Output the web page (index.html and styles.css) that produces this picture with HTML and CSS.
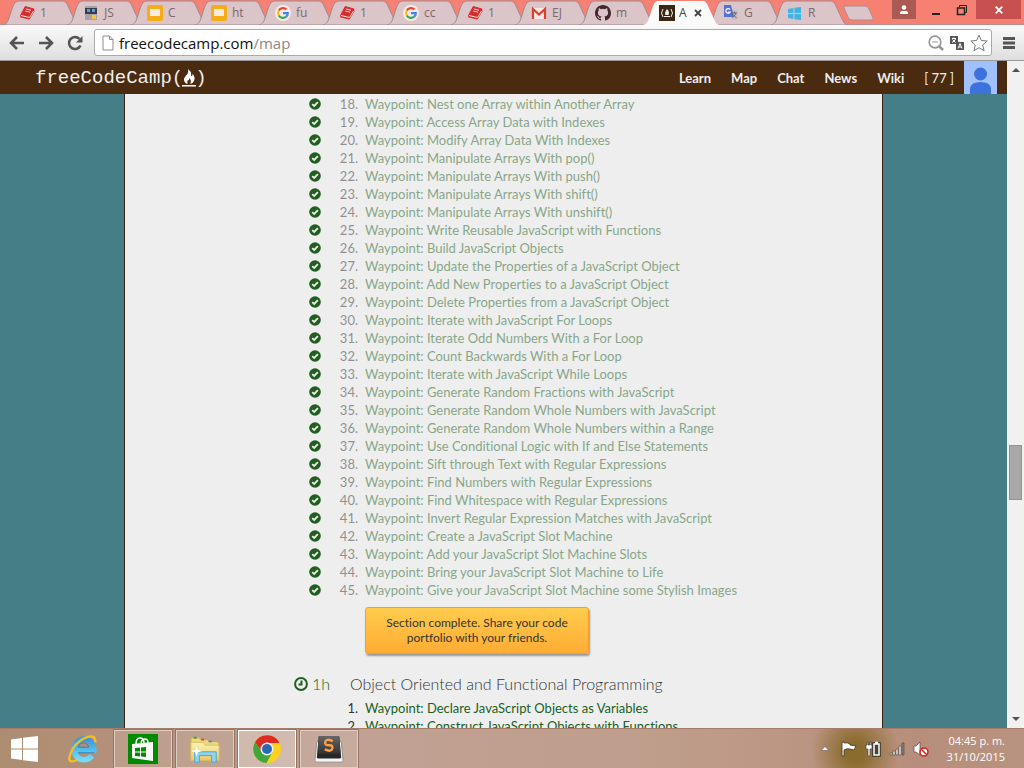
FILE: index.html
```html
<!DOCTYPE html>
<html lang="en">
<head>
<meta charset="utf-8">
<title>freeCodeCamp map</title>
<link rel="stylesheet" href="styles.css">
</head>
<body>
<svg class="defs" aria-hidden="true">
  <defs>
    <linearGradient id="ieblue" x1="0" y1="0" x2="0" y2="1"><stop offset="0" stop-color="#2f9be0"/><stop offset="1" stop-color="#74dcfb"/></linearGradient>
    <linearGradient id="keycap" x1="0" y1="0" x2="0" y2="1"><stop offset="0" stop-color="#666"/><stop offset="1" stop-color="#333"/></linearGradient>
    <linearGradient id="folder" x1="0" y1="0" x2="0" y2="1"><stop offset="0" stop-color="#fdf3b4"/><stop offset="1" stop-color="#e9cb62"/></linearGradient>
  </defs>
  <symbol id="tab-shape" viewBox="0 0 76 25" preserveAspectRatio="none"><path d="M0 25C4 24 5 21 6 18L10 6Q12 1 15 1H60Q63 1 65 6L71 19Q73 24 76 25Z"/></symbol>
  <symbol id="book" viewBox="0 0 16 16"><path fill="#d92b2b" d="M6 1L15 3.500L15.500 6L10.500 14.500L1.500 12.500Q.5 11 1.500 9.500Z"/><path fill="none" stroke="#f4dcdc" stroke-width="1" d="M2 10.500L10.500 12.500L14.500 6M7 4L12 5.200M6.200 6L11 7.200"/></symbol>
  <symbol id="slides" viewBox="0 0 16 16"><rect width="16" height="16" rx="2" fill="#f6ac17"/><rect x="3" y="4" width="10" height="7" fill="#ffe9dc"/></symbol>
  <symbol id="google" viewBox="0 0 16 16"><circle cx="8" cy="8" r="8" fill="#fbe9e7"/><g fill="none" stroke-width="2.200"><path stroke="#ea4335" d="M3.800 5.500A4.800 4.800 0 0 1 11.400 4.500"/><path stroke="#fbbc05" d="M3.800 5.500A5 5 0 0 0 3.800 10.500"/><path stroke="#34a853" d="M3.800 10.500A4.900 4.900 0 0 0 11.200 11.700"/><path stroke="#4285f4" d="M8 8.200H12.800Q12.800 10.500 11.200 11.700"/></g></symbol>
  <symbol id="check" viewBox="0 0 12 12"><circle cx="6" cy="6" r="5.800" fill="#215f1e"/><path fill="none" stroke="#eee" stroke-width="1.800" d="M3.200 6.100L5.200 8L8.900 4.200"/></symbol>
</svg>

<header class="tabstrip">
  <nav class="tabs" aria-label="Tabs">
    <a class="tab" href="#"><svg class="shape"><use href="#tab-shape"/></svg><svg class="fav"><use href="#book"/></svg><span>1</span></a>
    <a class="tab" href="#"><svg class="shape"><use href="#tab-shape"/></svg><svg class="fav" viewBox="0 0 16 16"><path fill="#aaa0a8" d="M2 1H14V15H2Z"/><path fill="#383c48" d="M2 3H14V9H2Z"/><path fill="#4ba5dd" d="M4 4H7V7H4ZM9 4H12V7H9Z"/><path fill="#f5c542" d="M9 10H13V14H9Z"/></svg><span>JS</span></a>
    <a class="tab" href="#"><svg class="shape"><use href="#tab-shape"/></svg><svg class="fav"><use href="#slides"/></svg><span>C</span></a>
    <a class="tab" href="#"><svg class="shape"><use href="#tab-shape"/></svg><svg class="fav"><use href="#slides"/></svg><span>ht</span></a>
    <a class="tab" href="#"><svg class="shape"><use href="#tab-shape"/></svg><svg class="fav"><use href="#google"/></svg><span>fu</span></a>
    <a class="tab" href="#"><svg class="shape"><use href="#tab-shape"/></svg><svg class="fav"><use href="#book"/></svg><span>1</span></a>
    <a class="tab" href="#"><svg class="shape"><use href="#tab-shape"/></svg><svg class="fav"><use href="#google"/></svg><span>cc</span></a>
    <a class="tab" href="#"><svg class="shape"><use href="#tab-shape"/></svg><svg class="fav"><use href="#book"/></svg><span>1</span></a>
    <a class="tab" href="#"><svg class="shape"><use href="#tab-shape"/></svg><svg class="fav" viewBox="0 0 16 16"><path fill="#fbe9e4" d="M1 3H15V14H1Z"/><path fill="none" stroke="#d8412f" stroke-width="2.200" d="M2 14V4L8 9.500L14 4V14"/></svg><span>EJ</span></a>
    <a class="tab" href="#"><svg class="shape"><use href="#tab-shape"/></svg><svg class="fav" viewBox="0 0 16 16"><path fill="#43282c" d="M8 0C3.580 0 0 3.580 0 8c0 3.540 2.290 6.530 5.470 7.590.4.070.55-.17.55-.38 0-.19-.01-.82-.01-1.490-2.010.37-2.530-.49-2.690-.94-.09-.23-.48-.94-.82-1.130-.28-.15-.68-.52-.01-.53.63-.01 1.080.58 1.230.82.72 1.210 1.870.87 2.330.66.070-.52.28-.87.51-1.070-1.780-.2-3.640-.89-3.640-3.950 0-.87.31-1.590.82-2.150-.08-.2-.36-1.020.08-2.120 0 0 .67-.21 2.200.82a7.600 7.600 0 0 1 4 0c1.530-1.040 2.200-.82 2.200-.82.44 1.100.16 1.920.08 2.120.51.56.82 1.270.82 2.150 0 3.070-1.870 3.750-3.650 3.950.29.25.54.73.54 1.480 0 1.070-.01 1.930-.01 2.200 0 .21.15.46.55.38A8 8 0 0 0 16 8c0-4.420-3.580-8-8-8Z"/></svg><span>m</span></a>
    <a class="tab active" href="#"><svg class="shape"><use href="#tab-shape"/></svg><svg class="fav" viewBox="0 0 16 16"><path fill="#3b2613" d="M0 0H16V16H0Z"/><path fill="none" stroke="#eee" d="M4 4Q1 8 4 12M12 4Q15 8 12 12M5 11.500H11"/><path fill="#eee" d="M8 4Q11 7 9.500 10H6.500Q5 8 8 4Z"/></svg><span>A</span><svg class="tab-close" viewBox="0 0 8 8"><path d="M1 1L7 7M7 1L1 7"/></svg></a>
    <a class="tab" href="#"><svg class="shape"><use href="#tab-shape"/></svg><svg class="fav" viewBox="0 0 16 16"><path fill="#c9bfc9" d="M7 5H15V15H9Z"/><path fill="#5571d6" d="M1 0H8L11 12H1Z"/><path fill="none" stroke="#fff" stroke-width="1.200" d="M7 4.500A2.300 2.300 0 1 0 7.200 7H5.200"/><path fill="none" stroke="#666" d="M9 8H14M11.500 6.500V8M13 8Q12 11 9.500 12.500M10 9.500L13.500 13"/></svg><span>G</span></a>
    <a class="tab" href="#"><svg class="shape"><use href="#tab-shape"/></svg><svg class="fav" viewBox="0 0 16 16"><path fill="#3fb5e6" d="M1 4L6.500 3V8H1ZM7.500 2.800L14 2V8H7.500ZM1 9H6.500V14L1 13ZM7.500 9H14V15L7.500 14.200Z"/></svg><span>R</span></a>
  </nav>
  <button class="newtab" aria-label="New tab"><svg viewBox="0 0 32 16"><path fill="#dcc5c9" stroke="#a98f93" d="M3 1H22Q25 1 26 4L30 13Q31 15 28 15H9Q6 15 5 12L1 3Q0 1 3 1Z"/></svg></button>
  <div class="winbtns">
    <button class="user" aria-label="User"><svg viewBox="0 0 10 10"><circle cx="5" cy="2.500" r="2.300"/><path d="M1 9V7.500Q1 6 3 6H7Q9 6 9 7.500V9Z"/></svg></button>
    <button class="min" aria-label="Minimize"><svg viewBox="0 0 10 12"><path fill="#222" d="M1 9H9V11H1Z"/></svg></button>
    <button class="max" aria-label="Restore"><svg viewBox="0 0 12 12"><path fill="none" stroke="#222" d="M3.500 3V1.500H10.500V8.500H9"/><path fill="none" stroke="#222" stroke-width="1.500" d="M1.500 4H8.500V10.500H1.500Z"/></svg></button>
    <button class="close" aria-label="Close"><svg viewBox="0 0 8 8"><path fill="none" stroke="#fff" stroke-width="1.800" d="M.7 .7L7.300 7.300M7.300 .7L.7 7.300"/></svg></button>
  </div>
</header>

<div class="toolbar">
  <button aria-label="Back"><svg viewBox="0 0 16 16"><path d="M15 8H2M8 2L2 8L8 14"/></svg></button>
  <button aria-label="Forward"><svg viewBox="0 0 16 16"><path d="M1 8H14M8 2L14 8L8 14"/></svg></button>
  <button aria-label="Reload"><svg viewBox="0 0 16 16"><path d="M12.500 4A6 6 0 1 0 13.500 10.500"/><path class="solid" d="M9 7.500H15.500V1Z"/></svg></button>
  <div class="omnibox">
    <svg class="doc" viewBox="0 0 12 16"><path fill="#fff" stroke="#8b8b8b" d="M1 1H7.500L11 4.500V15H1ZM7.500 1V4.500H11"/></svg>
    <a class="url" href="#">freecodecamp.com<span>/map</span></a>
    <svg viewBox="0 0 16 16"><g fill="none" stroke="#959595"><circle cx="7" cy="7" r="5.800" stroke-width="1.700"/><path stroke-width="2.500" d="M11 11L15 15"/><path d="M4 7H10"/></g></svg>
    <svg class="translate" viewBox="0 0 16 16"><path fill="#555" d="M1 1H9V9H1ZM7 7H15V15H7Z"/><path fill="none" stroke="#fff" d="M3 3.500H7M5 2.500V3.500M6.500 4Q5.500 6.500 3 7.500M3.500 4.500L6.500 7.500M9 13.500L11 8.500L13 13.500M10 12H12"/></svg>
    <svg class="star" viewBox="0 0 18 18"><path fill="#fff" stroke="#777" d="M9 1L11.300 6.500L17.200 7L12.700 11L14.100 16.800L9 13.700L3.900 16.800L5.300 11L.8 7L6.700 6.500Z"/></svg>
  </div>
  <button class="menu" aria-label="Menu"><svg viewBox="0 0 14 14"><path d="M1 2.500H13M1 7H13M1 11.500H13"/></svg></button>
</div>

<div class="viewport">
  <div class="page">
    <header class="navbar">
      <a class="brand" href="#">freeCodeCamp(<svg viewBox="0 0 14 20"><path fill="#fff" d="M6 1Q10 4 9 8Q11 8 10.500 5.500Q15 11 10 15.500H8Q10 13 7.500 10Q7 13 5.500 12.500Q5 14 6 15.500H4Q0 12 4 7.500Q7 5 6 1ZM0 17H14V18.500H0Z"/></svg>)</a>
      <nav class="links">
        <a href="#">Learn</a><a href="#">Map</a><a href="#">Chat</a><a href="#">News</a><a href="#">Wiki</a><a href="#">[ 77 ]</a>
      </nav>
      <svg class="avatar" viewBox="0 0 33 33"><path fill="#a0c1fc" d="M0 0H33V33H0Z"/><circle cx="16.500" cy="13" r="6.500" fill="#3d72dd"/><path fill="#3d72dd" d="M6 33V27Q7 21 16.500 21Q26 21 27 27V33Z"/></svg>
    </header>
    <main class="content">
      <ol class="lessons done">
        <li><svg><use href="#check"/></svg><span>18.</span><a href="#">Waypoint: Nest one Array within Another Array</a></li>
        <li><svg><use href="#check"/></svg><span>19.</span><a href="#">Waypoint: Access Array Data with Indexes</a></li>
        <li><svg><use href="#check"/></svg><span>20.</span><a href="#">Waypoint: Modify Array Data With Indexes</a></li>
        <li><svg><use href="#check"/></svg><span>21.</span><a href="#">Waypoint: Manipulate Arrays With pop()</a></li>
        <li><svg><use href="#check"/></svg><span>22.</span><a href="#">Waypoint: Manipulate Arrays With push()</a></li>
        <li><svg><use href="#check"/></svg><span>23.</span><a href="#">Waypoint: Manipulate Arrays With shift()</a></li>
        <li><svg><use href="#check"/></svg><span>24.</span><a href="#">Waypoint: Manipulate Arrays With unshift()</a></li>
        <li><svg><use href="#check"/></svg><span>25.</span><a href="#">Waypoint: Write Reusable JavaScript with Functions</a></li>
        <li><svg><use href="#check"/></svg><span>26.</span><a href="#">Waypoint: Build JavaScript Objects</a></li>
        <li><svg><use href="#check"/></svg><span>27.</span><a href="#">Waypoint: Update the Properties of a JavaScript Object</a></li>
        <li><svg><use href="#check"/></svg><span>28.</span><a href="#">Waypoint: Add New Properties to a JavaScript Object</a></li>
        <li><svg><use href="#check"/></svg><span>29.</span><a href="#">Waypoint: Delete Properties from a JavaScript Object</a></li>
        <li><svg><use href="#check"/></svg><span>30.</span><a href="#">Waypoint: Iterate with JavaScript For Loops</a></li>
        <li><svg><use href="#check"/></svg><span>31.</span><a href="#">Waypoint: Iterate Odd Numbers With a For Loop</a></li>
        <li><svg><use href="#check"/></svg><span>32.</span><a href="#">Waypoint: Count Backwards With a For Loop</a></li>
        <li><svg><use href="#check"/></svg><span>33.</span><a href="#">Waypoint: Iterate with JavaScript While Loops</a></li>
        <li><svg><use href="#check"/></svg><span>34.</span><a href="#">Waypoint: Generate Random Fractions with JavaScript</a></li>
        <li><svg><use href="#check"/></svg><span>35.</span><a href="#">Waypoint: Generate Random Whole Numbers with JavaScript</a></li>
        <li><svg><use href="#check"/></svg><span>36.</span><a href="#">Waypoint: Generate Random Whole Numbers within a Range</a></li>
        <li><svg><use href="#check"/></svg><span>37.</span><a href="#">Waypoint: Use Conditional Logic with If and Else Statements</a></li>
        <li><svg><use href="#check"/></svg><span>38.</span><a href="#">Waypoint: Sift through Text with Regular Expressions</a></li>
        <li><svg><use href="#check"/></svg><span>39.</span><a href="#">Waypoint: Find Numbers with Regular Expressions</a></li>
        <li><svg><use href="#check"/></svg><span>40.</span><a href="#">Waypoint: Find Whitespace with Regular Expressions</a></li>
        <li><svg><use href="#check"/></svg><span>41.</span><a href="#">Waypoint: Invert Regular Expression Matches with JavaScript</a></li>
        <li><svg><use href="#check"/></svg><span>42.</span><a href="#">Waypoint: Create a JavaScript Slot Machine</a></li>
        <li><svg><use href="#check"/></svg><span>43.</span><a href="#">Waypoint: Add your JavaScript Slot Machine Slots</a></li>
        <li><svg><use href="#check"/></svg><span>44.</span><a href="#">Waypoint: Bring your JavaScript Slot Machine to Life</a></li>
        <li><svg><use href="#check"/></svg><span>45.</span><a href="#">Waypoint: Give your JavaScript Slot Machine some Stylish Images</a></li>
      </ol>
      <button class="share">Section complete. Share your code<br>portfolio with your friends.</button>
      <h3 class="section"><span class="time"><svg viewBox="0 0 14 14"><circle cx="7" cy="7" r="5.900"/><path d="M7.500 3.500V7.500H4.500"/></svg>1h</span>Object Oriented and Functional Programming</h3>
      <ol class="lessons">
        <li><i></i><span>1.</span><a href="#">Waypoint: Declare JavaScript Objects as Variables</a></li>
        <li><i></i><span>2.</span><a href="#">Waypoint: Construct JavaScript Objects with Functions</a></li>
      </ol>
    </main>
  </div>
  <div class="scrollbar">
    <svg viewBox="0 0 8 4"><path d="M0 4L4 0L8 4Z"/></svg>
    <div class="track"><div class="thumb"></div></div>
    <svg viewBox="0 0 8 4"><path d="M0 0L4 4L8 0Z"/></svg>
  </div>
</div>

<footer class="taskbar">
  <button class="start" aria-label="Start"><svg viewBox="0 0 28 28"><path fill="#fff" d="M0 4.500L11 3V13.500H0ZM12 2.800L27 1V13.500H12ZM0 14.500H11V25L0 23.500ZM12 14.500H27V27L12 25.200Z"/></svg></button>
  <button class="ie" aria-label="Internet Explorer"><svg viewBox="0 0 32 32"><path fill="none" stroke="url(#ieblue)" stroke-width="6" d="M8 17H27.500A10.500 11 0 1 0 25.500 23"/><path fill="none" stroke="#1a78bd" stroke-width=".8" d="M11 14H22Q21 9.500 16.500 9.500T11 14M11 20H28"/><path fill="none" stroke="#f7bd22" stroke-width="2.500" d="M29 9Q30 1 21 3Q11 6 5 16Q-1 27 3 29Q6 30 10 27"/></svg></button>
  <button class="task" aria-label="Store"><svg viewBox="0 0 30 30"><path fill="#008a00" d="M0 0H30V30H0Z"/><path fill="#fff" d="M4 10L25 8V27L4 24Z"/><path fill="none" stroke="#fff" stroke-width="1.500" d="M8 10Q8 4 12 4T16 9M13 9Q14 5 17 5T20 9"/><path fill="#008a00" d="M7 14L12 13.500V17.500H7ZM13 13.400L18 13V17.500H13ZM7 18.500H12V22.500L7 22ZM13 18.500H18V23L13 22.600Z"/></svg></button>
  <button class="task" aria-label="File Explorer"><svg viewBox="0 0 32 32"><path fill="#efd780" stroke="#c8a84c" d="M1 7V4H10L12 6H19L20 8H29L31 10V28H1Z"/><path fill="url(#folder)" stroke="#dcc064" d="M1 9H14L16 12H31V28H1Z"/><path fill="#1faf3c" d="M4 3H7V5H4Z"/><path fill="#d54a29" d="M12 5H15V7H12Z"/><path fill="#2c8fd8" d="M20 7H23V9H20Z"/><path fill="#8fd3ef" stroke="#4fa3cc" d="M5 30V19H28V30H23V23H10V30Z"/><path fill="#fff" d="M7 13L8.500 17L13 18L8.500 19.500L7 24L5.500 19.500L1 18L5.500 17Z"/></svg></button>
  <button class="task current" aria-label="Chrome"><svg viewBox="0 0 30 30"><circle cx="15" cy="15" r="14" fill="#fcd21c"/><path fill="#de2b22" d="M3 8A14 14 0 0 1 27.500 9H15Q10 9 9 17Z"/><path fill="#42a63c" d="M3 8A14 14 0 0 0 14.500 29L20.500 18Q13 24 9 17Z"/><circle cx="15" cy="15" r="6.500" fill="#f2f2f2"/><circle cx="15" cy="15" r="5" fill="#2b68b8"/></svg></button>
  <button class="task" aria-label="Sublime Text"><svg viewBox="0 0 32 32"><path fill="#f4f4f4" stroke="#8c8c8c" d="M3 8L1 28Q1 30 3 30H29Q31 30 31 28L29 8Z"/><path fill="#262626" d="M5 3H27L29 25Q29 26 27 26H5Q3 26 3 25Z"/><path fill="url(#keycap)" d="M5 2H27L28 21H4Z"/><path fill="none" stroke="#ff9c45" stroke-width="2.600" d="M20 7.500Q12.500 4.500 12 8.500T16 12T19.500 15.500T11.500 16.500"/></svg></button>
  <div class="tray">
    <svg class="up" viewBox="0 0 8 5"><path fill="#fff" stroke="#63544c" stroke-width=".6" d="M0 4.500L4 .5L8 4.500Z"/></svg>
    <svg viewBox="0 0 16 16"><path fill="#fff" stroke="#3a2e20" stroke-width=".8" d="M1 1H3V2Q6 1 9 3V4L15 5L13 9L9 8Q6 7 3 9V15H1Z"/></svg>
    <svg viewBox="0 0 16 16"><path fill="none" stroke="#333" stroke-width="3.500" d="M9 3H14V14H9Z"/><path fill="#443" stroke="#fff" stroke-width="1.500" d="M9 3H14V14H9ZM10 1.500H13"/><path fill="#fff" stroke="#333" stroke-width=".6" d="M2 1H3V4H5V1H6V4H7V8H5V15H3V8H1V4H2Z"/></svg>
    <svg viewBox="0 0 16 16"><path fill="#fff" stroke="#554b45" stroke-width=".7" d="M1 12H3V14H1ZM4 10H6V14H4ZM7 8H9V14H7ZM10 5H12V14H10Z"/><path fill="#8b817b" stroke="#554b45" stroke-width=".7" d="M13 2H15V14H13Z"/></svg>
    <svg viewBox="0 0 16 16"><path fill="#fff" stroke="#554b45" stroke-width=".7" d="M1 5H3L7 1V14L3 11H1Z"/><circle cx="11" cy="11" r="4" fill="#fff" stroke="#d9261c" stroke-width="1.600"/><path stroke="#d9261c" stroke-width="1.600" d="M8.500 8.500L13.500 13.500"/></svg>
    <time class="clock">04:45 p. m.<br>31/10/2015</time>
  </div>
</footer>
</body>
</html>
```
FILE: styles.css
```css
* { box-sizing: border-box; }
body {
  margin: 0;
  height: 100vh;
  display: flex;
  flex-direction: column;
  overflow: hidden;
  font-family: Lato, sans-serif;
  font-size: 13px;
  font-variant-ligatures: none;
}
a { color: inherit; text-decoration: none; }
button { border: 0; padding: 0; background: none; font: inherit; display: flex; align-items: center; justify-content: center; }
svg { display: block; flex: none; }
.defs { position: absolute; width: 0; height: 0; }

/* Browser tabs */
.tabstrip { flex: none; display: flex; height: 25px; padding-left: 3px; background: #f68072; border-bottom: 1px solid #b98f8d; }
.tabs { display: flex; flex: none; height: 25px; }
.tab {
  position: relative;
  z-index: 0;
  display: flex;
  align-items: center;
  gap: 5px;
  width: 76px;
  height: 25px;
  margin-right: -12px;
  padding-left: 16px;
  font: 12px "Open Sans", sans-serif;
  color: #7b686c;
}
.tab .shape { position: absolute; inset: 0; width: 100%; height: 100%; z-index: -1; fill: #dbc5c9; stroke: #a08b8f; }
.tab span { white-space: nowrap; }
.tab.active { z-index: 1; gap: 4px; color: #444; }
.tab.active .shape { fill: #fafafa; stroke: none; }
.fav { width: 16px; height: 16px; }
.tab-close { width: 8px; height: 8px; margin-left: 3px; fill: none; stroke: #444; stroke-width: 1.8; }
.newtab { align-self: flex-start; margin: 5px 0 0 8px; }
.newtab svg { width: 32px; height: 16px; }
.winbtns { display: flex; align-items: flex-start; margin-left: auto; padding-right: 3px; }
.winbtns button { height: 19px; width: 26px; }
.winbtns svg { width: 12px; height: 12px; }
.winbtns .user { width: 24px; background: #aa5a52; margin-right: 7px; fill: #fff; }
.winbtns .user svg { width: 10px; height: 10px; }
.winbtns .max { margin-right: 1px; }
.winbtns .close { width: 45px; background: #c75050; }
.winbtns .close svg { width: 8px; height: 8px; }

/* Address bar */
.toolbar { flex: none; display: flex; align-items: center; gap: 13px; height: 36px; padding: 0 9px; background: linear-gradient(#fafafa, #dedede); border-bottom: 1px solid #999; }
.toolbar button svg { width: 16px; height: 16px; fill: none; stroke: #555; stroke-width: 2.6; }
.toolbar .solid { fill: #555; stroke: none; }
.omnibox { flex: 1; display: flex; align-items: center; gap: 5px; height: 27px; margin-left: -2px; padding: 0 3px 0 7px; background: #fff; border: 1px solid #aaa; border-radius: 3px; }
.omnibox svg { width: 16px; height: 16px; }
.omnibox .doc { width: 12px; }
.omnibox .star { width: 18px; height: 18px; }
.url { flex: 1; font: 15px/24px "Open Sans", sans-serif; color: #111; }
.url span { color: #888; }
.toolbar .menu { margin: 0 -1px 0 -3px; }
.toolbar .menu svg { width: 14px; height: 14px; stroke-width: 3; }

/* Web page */
.viewport { flex: 1; min-height: 0; display: flex; }
.page { flex: 1; display: flex; flex-direction: column; background: #457e86; overflow: hidden; }
.navbar { flex: none; display: flex; align-items: center; height: 33px; padding: 0 10px 0 35px; background: #4a2b0f; color: #fff; }
.brand { display: flex; align-items: center; font: 19px/32px "Liberation Mono", monospace; color: #eee; }
.brand svg { width: 14px; height: 20px; margin: 0 -1px; }
.links { display: flex; gap: 20px; margin-left: auto; margin-right: 10px; color: #eee; font-weight: 700; line-height: 32px; }
.links a:last-child { font-weight: 400; }
.avatar { width: 33px; height: 33px; }
.content { flex: 1; width: 100%; max-width: 759px; margin: 0 auto; padding: 1px 20px 0 184px; background: #eee; border: solid #3a2210; border-width: 0 1px; color: #333; overflow: hidden; }
.lessons { list-style: none; margin: 0; padding: 0; line-height: 18px; }
.lessons li { display: grid; grid-template-columns: 12px 37px 1fr; height: 18px; align-items: center; white-space: nowrap; }
.lessons svg { width: 12px; height: 12px; }
.lessons span { text-align: right; }
.lessons a { padding-left: 7px; color: #215f1e; }
.done span, .done a { opacity: .5; }
.share {
  width: 224px;
  height: 47px;
  margin: 8px 0 20px 56px;
  padding-bottom: 2px;
  border: 1px solid #f1a02f;
  border-radius: 3px;
  background: linear-gradient(#ffcc4d, #ffac33);
  box-shadow: 1px 2px 2px #999;
  color: #333;
  font-size: 12px;
  line-height: 15px;
}
.section { display: flex; align-items: center; margin: 0 0 5px -15px; font-size: 16px; font-weight: 300; line-height: 20px; }
.time { display: flex; align-items: center; gap: 4px; width: 56px; color: #215f1e; }
.time svg { width: 14px; height: 14px; fill: none; stroke: #215f1e; stroke-width: 2; }

.scrollbar { flex: none; width: 17px; display: flex; flex-direction: column; align-items: center; padding: 7px 2px; background: #f1f1f1; }
.scrollbar svg { width: 8px; height: 4px; fill: #505050; }
.track { flex: 1; width: 100%; padding-top: 373px; }
.thumb { height: 55px; background: #a8a8a8; border: 1px solid #929292; }

/* Taskbar */
.taskbar { flex: none; display: flex; align-items: center; gap: 4px; height: 40px; border-top: 1px solid #a57c68; background: radial-gradient(ellipse 44px 48px at 855px 23px, #8b6c2e 20%, transparent), linear-gradient(90deg, #ac8d70, #b39079 10%, #c1a194 35%, #bf9d8b 65%, #b78e7b 90%, #b8937f); }
.start { width: 50px; }
.start svg { width: 28px; height: 28px; }
.ie { width: 56px; padding-left: 1px; }
.ie svg, .task svg { width: 30px; height: 30px; }
.task { width: 58px; height: 38px; border: 1px solid #e0cdc4; background: #ffffff1c; outline: 1px solid #957466; }
.task.current { background: #ffffff50; border-color: #fff; }
.tray { display: flex; align-items: center; gap: 8px; margin-left: auto; padding-right: 19px; }
.tray svg { width: 16px; height: 16px; }
.tray .up { width: 8px; height: 5px; margin-right: 4px; }
.clock { margin-left: 10px; color: #fff; font: 11px/16px "Open Sans", sans-serif; text-align: right; }
```
